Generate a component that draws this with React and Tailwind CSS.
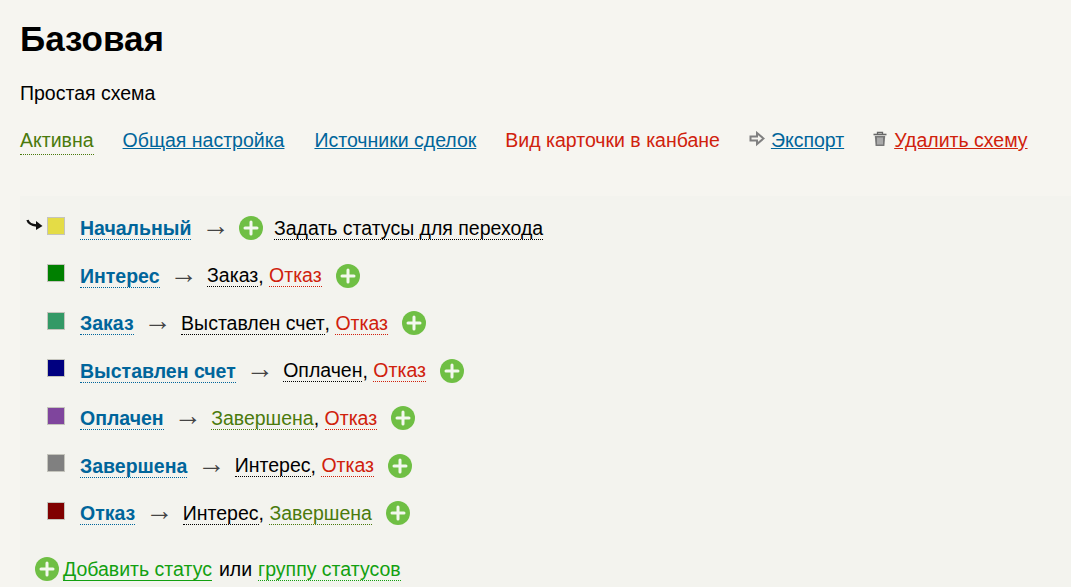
import React from 'react'

const RED = 'text-[#d0210c] border-[#d0210c]'
const BLACK = 'text-black border-black'
const GREEN = 'text-[#4a7a0c] border-[#4a7a0c]'

const rows = [
  { name: 'Интерес', color: 'bg-[#008000]', links: [['Заказ', BLACK], ['Отказ', RED]] },
  { name: 'Заказ', color: 'bg-[#339966]', links: [['Выставлен счет', BLACK], ['Отказ', RED]] },
  { name: 'Выставлен счет', color: 'bg-[#000080]', links: [['Оплачен', BLACK], ['Отказ', RED]] },
  { name: 'Оплачен', color: 'bg-[#7f459d]', links: [['Завершена', GREEN], ['Отказ', RED]] },
  { name: 'Завершена', color: 'bg-[#808080]', links: [['Интерес', BLACK], ['Отказ', RED]] },
  { name: 'Отказ', color: 'bg-[#800000]', links: [['Интерес', BLACK], ['Завершена', GREEN]] },
]

const PlusIcon = ({ className = '' }) => (
  <svg width="24" height="24" viewBox="0 0 24 24" className={'shrink-0 ' + className}>
    <circle cx="12" cy="12" r="12" fill="#6fbf44" />
    <path d="M12 6v12M6 12h12" stroke="#f3f8ee" strokeWidth="3" strokeLinecap="round" />
  </svg>
)

const StartArrow = () => (
  <svg width="18" height="14" viewBox="0 0 18 14" className="absolute left-[-22px] top-[1px]">
    <path d="M1.500 1c1 3.500 4 5 9 5.500" fill="none" stroke="#111" strokeWidth="2.400" />
    <path d="M10 2l6.500 5-6.500 4z" fill="#111" />
  </svg>
)

const Swatch = ({ color, start }) => (
  <span className={'relative mt-[-5px] h-[18px] w-[18px] shrink-0 border border-[#c4c4bc] ' + color}>
    {start && <StartArrow />}
  </span>
)

const Arrow = () => <span className="ml-[10px] mr-[9.500px] mt-[-4px] text-[28px] leading-none text-[#444]">→</span>

const StatusName = ({ children }) => (
  <a href="#" className="border-b border-dotted border-[#00659b] font-bold leading-[22px] text-[#00659b]">{children}</a>
)

const Dotted = ({ children, className }) => (
  <a href="#" className={'border-b border-dotted leading-[22px] ' + className}>{children}</a>
)

export default function App() {
  return (
    <div className="min-h-[587px] overflow-hidden bg-[#f6f5f0] pl-5 font-['Liberation_Sans',Arial,sans-serif] text-[19.500px] text-black">
      <h1 className="pt-[17px] text-[35px] font-bold leading-[44px]">Базовая</h1>
      <p className="mt-[20px] leading-[24px]">Простая схема</p>

      <div className="mt-[23px] flex items-start leading-[24px]">
        <span className="border-b border-dotted border-[#4a7a0c] pb-[2px] text-[#4a7a0c]">Активна</span>
        <a href="#" className="ml-[29px] text-[#00659b] underline">Общая настройка</a>
        <a href="#" className="ml-[30px] text-[#00659b] underline">Источники сделок</a>
        <a href="#" className="ml-[29px] text-[#d0210c]">Вид карточки в канбане</a>
        <svg width="16" height="16" viewBox="0 0 16 16" className="ml-[29px] mt-[3px]">
          <path d="M1.500 5.500h6.500v-3.500l6.500 5.500-6.500 5.500v-3.500h-6.500z" fill="#f6f5f0" stroke="#808080" strokeWidth="2" />
        </svg>
        <a href="#" className="ml-[6px] text-[#00659b] underline">Экспорт</a>
        <svg width="16" height="16" viewBox="0 0 16 16" className="ml-[28px] mt-[3px]">
          <path d="M1.500 3.500h13" stroke="#666" strokeWidth="1.600" />
          <path d="M5.500 3v-1.500h5v1.500" fill="none" stroke="#666" strokeWidth="1.300" />
          <path d="M2.800 5h10.400l-.8 10h-8.800z" fill="#777" />
          <path d="M6 6.500v7M8 6.500v7M10 6.500v7" stroke="#ddd" strokeWidth="1" />
        </svg>
        <a href="#" className="ml-[6px] text-[#d0210c] underline">Удалить схему</a>
      </div>

      <div className="mt-[41px] min-h-[392px] bg-[#f3f3ee] pl-[27px] pt-[20px] leading-[24px]">
        <div className="flex h-[24px] items-center">
          <Swatch color="bg-[#e4dc46]" start />
          <span className="ml-[15px]"><StatusName>Начальный</StatusName></span>
          <Arrow />
          <PlusIcon />
          <Dotted className={BLACK + ' ml-[11px]'}>Задать статусы для перехода</Dotted>
        </div>
        {rows.map((row) => (
          <div key={row.name} className="mt-[23.500px] flex h-[24px] items-center">
            <Swatch color={row.color} />
            <span className="ml-[15px]"><StatusName>{row.name}</StatusName></span>
            <Arrow />
            {row.links.map(([label, style], i) => (
              <React.Fragment key={label}>
                {i > 0 && <span className="whitespace-pre">, </span>}
                <Dotted className={style}>{label}</Dotted>
              </React.Fragment>
            ))}
            <PlusIcon className="ml-[14px]" />
          </div>
        ))}
        <div className="ml-[-12px] mt-[32px] flex h-[24px] items-center">
          <PlusIcon />
          <a href="#" className="ml-[4px] border-b border-[#12a010] leading-[22px] text-[#12a010]">Добавить статус</a>
          <span className="ml-[7px] mr-[6px]">или</span>
          <a href="#" className="border-b border-dotted border-[#12a010] leading-[22px] text-[#12a010]">группу статусов</a>
        </div>
      </div>
    </div>
  )
}
